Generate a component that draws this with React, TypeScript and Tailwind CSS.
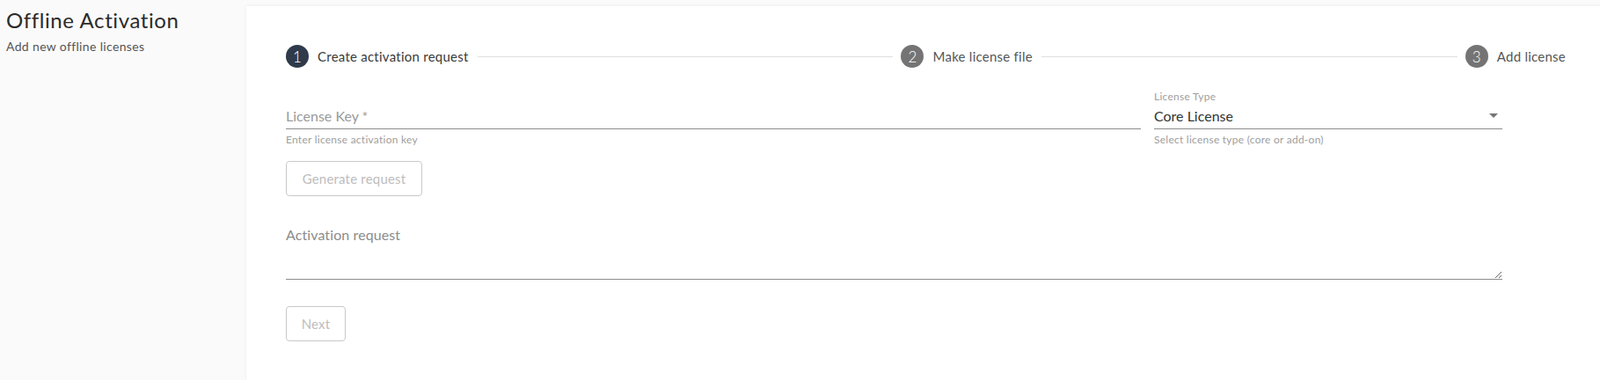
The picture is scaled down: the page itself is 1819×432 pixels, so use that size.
import { ChangeEvent, Fragment, useState } from "react";

type Step = { n: number; label: string; active?: boolean };

const STEPS: Step[] = [
  { n: 1, label: "Create activation request", active: true },
  { n: 2, label: "Make license file" },
  { n: 3, label: "Add license" },
];

function StepDot({ step }: { step: Step }) {
  return (
    <div className="flex shrink-0 items-center">
      <span
        className={`grid size-[26px] place-items-center rounded-full text-[17px] leading-none font-light text-white ${
          step.active ? "bg-[#2f3a4b]" : "bg-[#747474]"
        }`}
      >
        {step.n}
      </span>
      <span
        className={`ml-[10px] text-[15px] tracking-[0.25px] ${step.active ? "text-[#3a3a3a]" : "text-[#555]"}`}
      >
        {step.label}
      </span>
    </div>
  );
}

function Stepper() {
  // connectors are siblings so they all share the free width equally
  return (
    <div className="flex items-center">
      {STEPS.map((s, i) => (
        <Fragment key={s.n}>
          {i > 0 ? <div className="mr-[9px] ml-[10px] h-px flex-1 bg-[#e0e0e0]" /> : null}
          <StepDot step={s} />
        </Fragment>
      ))}
    </div>
  );
}

function OutlineButton({ children, w }: { children: string; w: string }) {
  return (
    <button
      type="button"
      disabled
      className={`h-10 ${w} rounded-[4px] border border-[#c9c9c9] text-[15px] tracking-[0.2px] text-[#bdbdbd]`}
    >
      {children}
    </button>
  );
}

export default function App() {
  const [key, setKey] = useState("");
  const [request, setRequest] = useState("");

  return (
    <div className="flex h-[432px] overflow-hidden bg-[#fafafa] font-['Lato',sans-serif]">
      <aside className="w-[280px] shrink-0 pt-[8px] pl-[7px]">
        <h1 className="text-[24px] leading-[30px] tracking-[0.6px] text-[#2b2b2b]">Offline Activation</h1>
        <p className="mt-[6px] text-[14px] leading-[18px] tracking-[0.35px] text-[#555]">Add new offline licenses</p>
      </aside>

      <main className="mt-[7px] flex-1 bg-white pt-[44px] pr-[39px] pl-[45px] shadow-[0_0_3px_rgba(0,0,0,0.08)]">
        <Stepper />

        <div className="mt-[26px] w-[1383px]">
          <div className="grid grid-cols-[1fr_396px] gap-[15px]">
            <div className="pt-[14px]">
              <input
                value={key}
                onChange={(e: ChangeEvent<HTMLInputElement>) => setKey(e.target.value)}
                placeholder="License Key *"
                className="h-[30px] w-full border-b border-[#8c8c8c] text-[16px] text-[#333] outline-none placeholder:text-[#9a9a9a]"
              />
              <p className="mt-[5px] text-[12px] leading-[14px] tracking-[0.25px] text-[#9e9e9e]">
                Enter license activation key
              </p>
            </div>
            <div>
              <p className="text-[12px] leading-[14px] tracking-[0.25px] text-[#9e9e9e]">License Type</p>
              <div className="flex h-[30px] items-center justify-between border-b border-[#8c8c8c]">
                <span className="text-[16px] text-[#333]">Core License</span>
                <svg viewBox="0 0 10 5" className="mr-[5px] h-[5px] w-[10px]" aria-hidden>
                  <path d="M0 0h10L5 5z" fill="#757575" />
                </svg>
              </div>
              <p className="mt-[5px] text-[12px] leading-[14px] tracking-[0.25px] text-[#9e9e9e]">
                Select license type (core or add-on)
              </p>
            </div>
          </div>

          <div className="mt-[17px]">
            <OutlineButton w="w-[155px]">Generate request</OutlineButton>
          </div>

          <div className="mt-[34px] flex flex-col">
            <label className="text-[16px] leading-[20px] tracking-[0.1px] text-[#8c8c8c]">Activation request</label>
            <textarea
              value={request}
              onChange={(e: ChangeEvent<HTMLTextAreaElement>) => setRequest(e.target.value)}
              className="h-[41px] w-full resize-y border-b border-[#8c8c8c] text-[16px] text-[#333] outline-none"
            />
          </div>

          <div className="mt-[30px]">
            <OutlineButton w="w-[68px]">Next</OutlineButton>
          </div>
        </div>
      </main>
    </div>
  );
}
